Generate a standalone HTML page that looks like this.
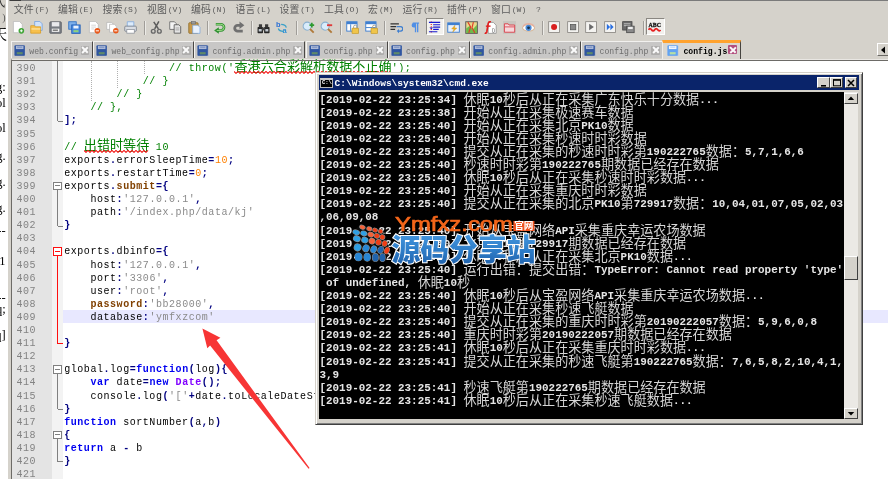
<!DOCTYPE html>
<html lang="zh-CN"><head><meta charset="utf-8"><title>config.js - Notepad++</title>
<style>
html,body{margin:0;padding:0;background:#fff}
body{width:888px;height:479px;overflow:hidden;position:relative;font-family:"Liberation Sans","Noto Sans CJK SC",sans-serif}
#root{will-change:transform;position:absolute;left:0;top:0;width:888px;height:479px;overflow:hidden;background:#d5d2cb}
#strip{position:absolute;left:0;top:0;width:8px;height:479px;background:#fff;overflow:hidden;z-index:5}
#strip .sg{position:absolute;left:0;top:0;width:5.5px;height:28px;background:#d5d2cb;border-bottom:1px solid #444;overflow:hidden}
#strip .sg .fr{right:0}
.fr{position:absolute;right:2.4px;font:12.5px/16px "Liberation Serif","Noto Serif CJK SC",serif;color:#000;white-space:nowrap}
.fr.big{font-size:14px;right:1px}
#npp{position:absolute;left:8.5px;top:0;right:0;height:61px}
#topline{position:absolute;left:0;top:0;right:0;height:1.4px;background:#7b7b7b}
#topline:before{content:"";position:absolute;left:1px;top:0;width:11.5px;height:0.8px;background:#3c3c3c}
#menu{position:absolute;left:-8.5px;top:0;width:888px;height:18px}
.mi{position:absolute;top:4.3px;font:9.9px/12px "Liberation Sans","Noto Sans CJK SC",sans-serif;color:#5c5c5c;white-space:nowrap;letter-spacing:0}
.mi i{font:normal 8.1px/12px "Liberation Mono",monospace;color:#5a5a5a;position:relative;top:-1.6px;margin-left:1px}
#toolbar{position:absolute;left:-8.5px;top:19px;width:888px;height:20px}
#toolbar svg{position:absolute;top:1.5px}
.sep{position:absolute;top:1.5px;width:1px;height:14.5px;background:#a09d98;box-shadow:1px 0 0 #ecebe7}
.pressed{position:absolute;top:-1.5px;height:17.5px;background:#f2f1ee;border:1px solid;border-color:#8a8782 #fff #fff #8a8782;box-sizing:border-box}
#tabs{position:absolute;left:-8.5px;top:40px;width:888px;height:19px}
.tab{position:absolute;top:0.5px;height:17px;background:#c8c7c6;box-sizing:border-box;border-top:1px solid #f2f1ef;border-right:1.5px solid #4a4845;border-left:1px solid #f4f3f0;white-space:nowrap;overflow:hidden}
.tab.act{top:-0.5px;height:19.5px;background:#dad7d1;border-top:3.2px solid #ffa22e;border-right:1.5px solid #45433f;border-left:1px solid #f0eeea}
.tab .fi{position:absolute;left:2px;top:3.3px}
.tab.act .fi{top:2.6px;left:4.2px}
.tab .tt{position:absolute;left:17.3px;top:4.2px;font:8.15px/11px "Liberation Mono",monospace;color:#6e6e6e}
.tab.act .tt{color:#000;font-weight:bold;top:3.6px;left:20.2px;font-size:8.15px}
.tx{position:absolute;right:2.7px;top:4.6px;width:8.6px;height:8.5px;background:#aeadac;border-radius:1px}
.tx:before,.tx:after{content:"";position:absolute;left:3.5px;top:0.2px;width:1.6px;height:8.1px;background:#fafafa;transform:rotate(45deg)}
.tx:after{transform:rotate(-45deg)}
.tx.ax{background:#b24f7e;top:2.9px;right:3.6px;width:9.2px;height:9px}
.tx.ax:before,.tx.ax:after{left:3.8px;top:0.3px;height:8.4px;width:1.7px}
#tabscroll{position:absolute;left:876.7px;top:3px;width:12px;height:13px;background:#d5d2cb;border:1px solid;border-color:#fff #6b6964 #6b6964 #fff;box-sizing:border-box}
#tabscroll svg{position:absolute;left:2px;top:1.5px}
#editor{position:absolute;left:0;top:0;width:888px;height:479px}
#editor:before{content:"";position:absolute;left:11px;top:59px;right:0;bottom:0;background:#fff;border-top:1px solid #e9e7e3;border-left:1px solid #6d6b67}
#editor:after{content:"";position:absolute;left:11px;top:60px;right:0;height:1px;background:#6d6b67}
.lnbg{position:absolute;left:12px;top:61px;width:39.5px;bottom:0;background:#e4e4e4}
.foldbg{position:absolute;left:51.5px;top:61px;width:11.5px;bottom:0;background:#f3f3f3}
.hl{position:absolute;left:63px;right:0;height:13.1px;background:#e8e8ff}
.ig{position:absolute;width:0;border-left:1px dotted #b0b0b0}
.ln{position:absolute;left:16.4px;height:13.1px;font:10px/13.1px "Liberation Mono",monospace;letter-spacing:0.55px;color:#838383;white-space:pre}
.cl{position:absolute;left:64.2px;height:13.1px;font:10px/13.1px "Liberation Mono","Noto Serif CJK SC",monospace;letter-spacing:0.55px;color:#000;white-space:pre}
.cl .c{letter-spacing:0;font-size:13.1px;font-family:"Noto Sans CJK SC","Noto Serif CJK SC",sans-serif;line-height:0;position:relative}
.sq{position:absolute}
.o{color:#000080;font-weight:bold}
.s{color:#8a8a8a}
.k{color:#0000f0;font-weight:bold}
.g{color:#008000}
.n{color:#ff8000}
.b{color:#804000;font-weight:bold}
.t{color:#8000ff;font-weight:bold}
#arrow{position:absolute;left:0;top:0}
#cmd{position:absolute;left:315px;top:72px;width:547.5px;height:352.6px;background:#d5d2cb;box-sizing:border-box;border:1px solid;border-color:#d4d0c8 #404040 #404040 #d4d0c8;box-shadow:inset 1px 1px 0 #fff,inset -1px -1px 0 #808080}
#ctitle{position:absolute;left:2.5px;top:2px;width:540.5px;height:14.8px;background:#0a246a}
#cicon{position:absolute;left:1.8px;top:2.8px;width:12.8px;height:10px;background:#000;border:0.8px solid #b8b8b8;border-top:2px solid #c8c8c8;box-sizing:border-box;overflow:hidden}
#cicon b{position:absolute;left:0.6px;top:0.6px;font:bold 5.6px/6px "Liberation Mono",monospace;color:#fff}
#ctext{position:absolute;left:16px;top:1.6px;font:bold 9.52px/13px "Liberation Mono",monospace;color:#fff;white-space:pre}
.wb{position:absolute;top:2.2px;width:12.5px;height:10.7px;background:#d5d2cb;box-sizing:border-box;border:1px solid;border-color:#fff #404040 #404040 #fff}
.wb svg{position:absolute;left:-0.5px;top:-0.5px}
#cclient{position:absolute;left:2.7px;top:18.6px;width:525.7px;height:327.8px;background:#000;overflow:hidden}
.tl{position:absolute;left:0.8px;height:13.1px;font:bold 10.92px/13.1px "Liberation Mono",monospace;color:#e6e6e6;white-space:pre}
.tl .cc{font:400 13.1px/0 "Noto Sans CJK SC","Noto Serif CJK SC",sans-serif;color:#d6d6d6;position:relative;top:1px}
#cscroll{position:absolute;left:528.4px;top:18.6px;width:13.4px;height:327.8px;background:#ebe9e5}
.sb{position:absolute;left:0;width:13.4px;height:11.5px;background:#d5d2cb;box-sizing:border-box;border:1px solid;border-color:#fff #404040 #404040 #fff}
.sb svg{position:absolute;left:-0.3px;top:-1px}
#logo{position:absolute;left:345px;top:208px}

</style></head><body>
<div id="root">
<div id="strip"><div class="sg"><span class="fr big" style="top:-6px;color:#333">式</span><span class="fr" style="top:10px;color:#555;font-size:10px">)</span></div><span class="fr big" style="top:27px">天</span><span class="fr" style="top:78.8px">g:</span><span class="fr" style="top:94.8px">ol</span><span class="fr" style="top:120.3px">ol</span><span class="fr" style="top:147.8px">g.</span><span class="fr" style="top:173.8px">g.</span><span class="fr" style="top:199.8px">g.</span><span class="fr" style="top:222.8px">--</span><span class="fr" style="top:252.8px">.1</span><span class="fr" style="top:289.8px">--</span><span class="fr" style="top:300.8px">q;</span><span class="fr" style="top:326.8px">q]</span></div>
<div id="npp">
<div id="topline"></div>
<div id="menu"><span class="mi" style="left:13.8px">文件<i>(F)</i></span><span class="mi" style="left:58.0px">编辑<i>(E)</i></span><span class="mi" style="left:102.5px">搜索<i>(S)</i></span><span class="mi" style="left:147.0px">视图<i>(V)</i></span><span class="mi" style="left:191.0px">编码<i>(N)</i></span><span class="mi" style="left:235.5px">语言<i>(L)</i></span><span class="mi" style="left:279.5px">设置<i>(T)</i></span><span class="mi" style="left:324.0px">工具<i>(O)</i></span><span class="mi" style="left:368.0px">宏<i>(M)</i></span><span class="mi" style="left:402.5px">运行<i>(R)</i></span><span class="mi" style="left:447.0px">插件<i>(P)</i></span><span class="mi" style="left:491.0px">窗口<i>(W)</i></span><span class="mi" style="left:535px"><i>?</i></span></div>
<div id="toolbar"><svg style="left:11.9px" width="13.1" height="13.1" viewBox="0 0 14 14"><path d="M1.5 0.5 H8 L11 3.5 V12.5 H1.5 Z" fill="#fff" stroke="#b8b8b8" stroke-width="0.8"/><circle cx="10" cy="10.5" r="3" fill="#3fa535"/><path d="M8.5 10.5h3M10 9v3" stroke="#fff" stroke-width="1"/></svg><svg style="left:30.2px" width="13.1" height="13.1" viewBox="0 0 14 14"><path d="M5 0.5h5.5l2.5 2.5v7H5z" fill="#cfe2fb" stroke="#6d9fe0" stroke-width="0.8"/><path d="M0.8 5h4l1 1.2h5.5V13H0.8z" fill="#f7c04d" stroke="#d99a1f" stroke-width="0.8"/><path d="M1.5 8.5h9.5" stroke="#fde9b0" stroke-width="1.2"/></svg><svg style="left:48.7px" width="13.1" height="13.1" viewBox="0 0 14 14"><rect x="0.8" y="0.8" width="12.4" height="12.4" rx="1" fill="#777b82" stroke="#5b5e64" stroke-width="0.8"/><rect x="3" y="1.2" width="8" height="4.6" fill="#e9e9ec"/><rect x="3" y="8.2" width="8" height="3.4" fill="#f5f5f5"/><rect x="4" y="9.2" width="5.5" height="1.2" fill="#555"/></svg><svg style="left:68.2px" width="13.1" height="13.1" viewBox="0 0 14 14"><rect x="0.8" y="0.8" width="8" height="8" fill="#7fb0ea" stroke="#2e6fc2" stroke-width="0.9"/><rect x="4" y="4.2" width="9" height="9" fill="#4a8be0" stroke="#1f5db5" stroke-width="0.9"/><rect x="5.8" y="5" width="5.4" height="3" fill="#eaf2fd"/><rect x="5.8" y="9.8" width="5.4" height="2.2" fill="#8ed17c"/></svg><svg style="left:87.7px" width="13.1" height="13.1" viewBox="0 0 14 14"><path d="M1.5 0.5 H8 L11 3.5 V12.5 H1.5 Z" fill="#fff" stroke="#b8b8b8" stroke-width="0.8"/><path d="M3.5 4.5h5M3.5 6.5h5M3.5 8.5h3" stroke="#c9c9c9" stroke-width="0.8"/><circle cx="10" cy="10.5" r="3" fill="#e8581a"/><path d="M8.3 10.5h3.4" stroke="#fff" stroke-width="1.1"/></svg><svg style="left:106.2px" width="13.1" height="13.1" viewBox="0 0 14 14"><path d="M0.8 1.5H6l2 2V9H0.8z" fill="#fff" stroke="#b5b5b5" stroke-width="0.8"/><path d="M3.8 3.5H9l2 2V12H3.8z" fill="#fff" stroke="#b5b5b5" stroke-width="0.8"/><circle cx="10.5" cy="10.5" r="2.9" fill="#e8581a"/><path d="M8.9 10.5h3.2" stroke="#fff" stroke-width="1.1"/></svg><svg style="left:123.7px" width="13.1" height="13.1" viewBox="0 0 14 14"><path d="M3.5 0.8h7v5h-7z" fill="#dcebfb" stroke="#7aa7de" stroke-width="0.8"/><rect x="0.8" y="5.5" width="12.4" height="5.5" rx="1" fill="#d9dde3" stroke="#6f7782" stroke-width="0.8"/><rect x="3" y="9" width="8" height="4" fill="#fff" stroke="#8a8f98" stroke-width="0.8"/></svg><span class="sep" style="left:144.0px"></span><svg style="left:150.2px" width="13.1" height="13.1" viewBox="0 0 14 14"><path d="M9.5 0.5L5 8.5M4 1l5 7.5" stroke="#5a5a5a" stroke-width="1.6"/><circle cx="3.5" cy="11" r="2" fill="none" stroke="#6a6a6a" stroke-width="1.5"/><circle cx="10" cy="11" r="2" fill="none" stroke="#6a6a6a" stroke-width="1.5"/></svg><svg style="left:168.7px" width="13.1" height="13.1" viewBox="0 0 14 14"><path d="M0.8 0.8h5l2 2V9h-7z" fill="#f4f4f4" stroke="#666" stroke-width="0.9"/><path d="M5.5 4h5l2 2v7h-7z" fill="#e4e4e4" stroke="#555" stroke-width="0.9"/><path d="M7 7.5h4M7 9.5h4" stroke="#888" stroke-width="0.7"/></svg><svg style="left:187.7px" width="13.1" height="13.1" viewBox="0 0 14 14"><rect x="0.8" y="1.8" width="10" height="11.4" rx="1" fill="#c89a4a" stroke="#8a6a2a" stroke-width="0.8"/><rect x="3.5" y="0.6" width="4.6" height="2.6" fill="#9a9a9a" stroke="#666" stroke-width="0.6"/><path d="M5 4.5h5.5l2.3 2.3v6.4H5z" fill="#eaf2fd" stroke="#7aa7de" stroke-width="0.8"/></svg><span class="sep" style="left:207.0px"></span><svg style="left:213.2px" width="13.1" height="13.1" viewBox="0 0 14 14"><path d="M3 3.5h5.5a3.2 3.2 0 0 1 0 6.6H5" fill="none" stroke="#2f9130" stroke-width="2.8"/><path d="M6.2 6.6L1.2 10.2L6.2 13.6z" fill="#2f9130"/><path d="M3.4 3.5h5.1a3.2 3.2 0 0 1 0 6.6H4" fill="none" stroke="#a5e08f" stroke-width="1"/></svg><svg style="left:231.7px" width="13.1" height="13.1" viewBox="0 0 14 14"><path d="M9 4.6H6a3 3 0 0 0 0 6.2h5.5" fill="none" stroke="#707070" stroke-width="3"/><path d="M8 0.6l5.2 4L8 8.6z" fill="#707070"/></svg><span class="sep" style="left:251.0px"></span><svg style="left:256.7px" width="13.1" height="13.1" viewBox="0 0 14 14"><rect x="0.6" y="6.5" width="5.8" height="6.5" rx="0.8" fill="#262626"/><rect x="7.6" y="6.5" width="5.8" height="6.5" rx="0.8" fill="#262626"/><rect x="2" y="3.5" width="3.4" height="3.4" fill="#3a3a3a"/><rect x="8.6" y="3.5" width="3.4" height="3.4" fill="#3a3a3a"/><rect x="5.5" y="7" width="3" height="3" fill="#444"/><rect x="1.8" y="8.6" width="3.2" height="2.6" fill="#c5ccd4"/><rect x="8.9" y="8.6" width="3.2" height="2.6" fill="#c5ccd4"/></svg><svg style="left:275.7px" width="13.1" height="13.1" viewBox="0 0 14 14"><text x="0" y="6.5" font-family="Liberation Sans,sans-serif" font-size="8" font-weight="bold" fill="#2a6fd6">b</text><text x="7" y="13" font-family="Liberation Sans,sans-serif" font-size="8" font-weight="bold" fill="#2a8fd6">a</text><path d="M5.5 3.5c3 0 5 1 5.5 3.5M8 11c-3 0-5-1-5.5-3" fill="none" stroke="#39a0c8" stroke-width="1.3"/></svg><span class="sep" style="left:296.0px"></span><svg style="left:301.7px" width="13.1" height="13.1" viewBox="0 0 14 14"><circle cx="5.5" cy="5.5" r="4.3" fill="#d9ecfb" stroke="#8ab0cf" stroke-width="1.1"/><path d="M8.5 8.5l4 4" stroke="#b07a3a" stroke-width="2"/><path d="M8 4.5h5M10.5 2v5" stroke="#2e9a2e" stroke-width="1.8"/></svg><svg style="left:320.2px" width="13.1" height="13.1" viewBox="0 0 14 14"><circle cx="5.5" cy="5.5" r="4.3" fill="#d9ecfb" stroke="#8ab0cf" stroke-width="1.1"/><path d="M8.5 8.5l4 4" stroke="#b07a3a" stroke-width="2"/><path d="M7.5 4.5h5.5" stroke="#e03a3a" stroke-width="2"/></svg><span class="sep" style="left:339.5px"></span><svg style="left:345.7px" width="13.1" height="13.1" viewBox="0 0 14 14"><rect x="0.8" y="0.8" width="11" height="10" fill="#fff" stroke="#3f7fd0" stroke-width="1"/><rect x="0.8" y="0.8" width="11" height="2.6" fill="#3f7fd0"/><path d="M5 3.5v7" stroke="#3f7fd0" stroke-width="1"/><rect x="6.4" y="7.6" width="7" height="6" rx="0.8" fill="#f0c54a" stroke="#b8902a" stroke-width="0.7"/><path d="M8.1 7.6V6.2a1.8 1.8 0 0 1 3.6 0V7.6" fill="none" stroke="#a8a08a" stroke-width="1"/></svg><svg style="left:364.7px" width="13.1" height="13.1" viewBox="0 0 14 14"><rect x="0.8" y="0.8" width="11" height="10" fill="#fff" stroke="#3f7fd0" stroke-width="1"/><rect x="0.8" y="0.8" width="11" height="2.6" fill="#3f7fd0"/><path d="M1 7h10.5" stroke="#3f7fd0" stroke-width="1"/><rect x="6.4" y="7.6" width="7" height="6" rx="0.8" fill="#f0c54a" stroke="#b8902a" stroke-width="0.7"/><path d="M8.1 7.6V6.2a1.8 1.8 0 0 1 3.6 0V7.6" fill="none" stroke="#a8a08a" stroke-width="1"/></svg><span class="sep" style="left:384.0px"></span><svg style="left:389.7px" width="13.1" height="13.1" viewBox="0 0 14 14"><path d="M0.5 3h9M0.5 6h6M0.5 9h5" stroke="#333" stroke-width="1.3"/><path d="M7 6h4.2a1.8 1.8 0 0 1 0 4.8H9" fill="none" stroke="#3f7fd0" stroke-width="1.3"/><path d="M9.6 8.6L7.2 10.8l2.4 2.2z" fill="#3f7fd0"/></svg><svg style="left:408.7px" width="11.2" height="13.1" viewBox="0 0 12 14"><path d="M7 2.2V12M9.3 2.2V12" stroke="#4f8fe6" stroke-width="1.4"/><path d="M7.5 2.2H5.2a2.4 2.4 0 0 0 0 4.8h2.3z" fill="#4f8fe6"/><path d="M4 2.2h6.8" stroke="#4f8fe6" stroke-width="1.2"/></svg><span class="pressed" style="left:426px;width:18px"></span><svg style="left:428.2px" width="13.1" height="13.1" viewBox="0 0 14 14"><path d="M3.5 0.5v13" stroke="#e02020" stroke-width="1.2" stroke-dasharray="1.3 1.3"/><path d="M1 1.5h12M5.5 4h7.5M5.5 6.5h7.5M5.5 9h6M1 11.5h9" stroke="#1a1ad0" stroke-width="1.3"/><path d="M1.5 7l2 1.8l2-1.8" fill="#1a1ad0"/></svg><svg style="left:446.7px" width="13.1" height="13.1" viewBox="0 0 14 14"><rect x="0.8" y="2" width="12.4" height="10" fill="#e9f1fb" stroke="#3f7fd0" stroke-width="1"/><rect x="0.8" y="2" width="12.4" height="2.4" fill="#3f7fd0"/><path d="M8.5 4.5L5 8.5h2.5L6 12l4.5-4.5H8z" fill="#f0b020" stroke="#c98a10" stroke-width="0.4"/></svg><svg style="left:465.2px" width="13.1" height="13.1" viewBox="0 0 14 14"><rect x="0.8" y="0.8" width="12.4" height="12.4" fill="#e9d98a" stroke="#555" stroke-width="1"/><path d="M1.2 8l4-3l3 4l4.6-5v8.8H1.2z" fill="#6fba4a"/><path d="M3 1.2l3 5l-2 6.5M9 1.2l-1.5 6l3 5.5" fill="none" stroke="#e03a2a" stroke-width="1.2"/></svg><svg style="left:483.7px" width="13.1" height="13.1" viewBox="0 0 14 14"><path d="M4.5 1.5h5.5l3 3v8.7H4.5z" fill="#fff" stroke="#8a8a8a" stroke-width="0.8"/><path d="M7.5 0.8c-2.5-0.5-3 1.2-3.3 3.5L3 11.5c-0.3 1.5-1.2 1.8-2.2 1.3" fill="none" stroke="#e02020" stroke-width="1.8"/><path d="M2 5.5h5" stroke="#e02020" stroke-width="1.5"/><text x="8.2" y="11.5" font-family="Liberation Sans,sans-serif" font-size="5.5" fill="#555">()</text></svg><svg style="left:503.2px" width="13.1" height="13.1" viewBox="0 0 14 14"><rect x="0" y="0" width="14" height="14" fill="#c9c6c0"/><path d="M1.5 3h4l1 1.3h6V12h-11z" fill="#f6d9dc" stroke="#d9404a" stroke-width="1"/><path d="M2 6.3h10" stroke="#d9404a" stroke-width="0.9"/></svg><svg style="left:521.7px" width="13.1" height="13.1" viewBox="0 0 14 14"><path d="M0.3 7.5C3 2.5 11 2.5 13.7 7.5C11 12 3 12 0.3 7.5z" fill="#fff" stroke="#d8b89a" stroke-width="1.1"/><circle cx="7" cy="7.3" r="3.3" fill="#4a8ad8"/><circle cx="7" cy="7.3" r="1.5" fill="#16324f"/><path d="M0.8 5.8C3.5 1.8 10.5 1.8 13.2 5.8" fill="none" stroke="#e6b0a0" stroke-width="1.1"/></svg><span class="sep" style="left:541.5px"></span><svg style="left:547.7px" width="13.1" height="13.1" viewBox="0 0 14 14"><rect x="0.7" y="0.7" width="11.6" height="11.6" fill="#f4f3f0" stroke="#8a8782" stroke-width="0.9"/><circle cx="6.5" cy="6.5" r="3.2" fill="#d81e1e"/></svg><svg style="left:566.7px" width="13.1" height="13.1" viewBox="0 0 14 14"><rect x="0.7" y="0.7" width="11.6" height="11.6" fill="#f4f3f0" stroke="#8a8782" stroke-width="0.9"/><rect x="3.6" y="3.6" width="5.8" height="5.8" fill="#8a8a8a" stroke="#555" stroke-width="0.8"/></svg><svg style="left:585.4px" width="13.1" height="13.1" viewBox="0 0 14 14"><rect x="0.7" y="0.7" width="11.6" height="11.6" fill="#f4f3f0" stroke="#8a8782" stroke-width="0.9"/><path d="M4.5 3l5 3.5l-5 3.5z" fill="#6a6a6a"/></svg><svg style="left:604.2px" width="13.1" height="13.1" viewBox="0 0 14 14"><rect x="0.7" y="0.7" width="11.6" height="11.6" fill="#f4f3f0" stroke="#8a8782" stroke-width="0.9"/><path d="M3 3l3.5 3.5L3 10zM6.8 3l3.5 3.5L6.8 10z" fill="#2a6fe0"/></svg><svg style="left:622.2px" width="13.1" height="13.1" viewBox="0 0 14 14"><rect x="0.7" y="0.7" width="10" height="9" fill="#6a6a6a" stroke="#444" stroke-width="0.8"/><path d="M2 3h7M2 5h7" stroke="#ddd" stroke-width="0.8"/><rect x="5" y="5.5" width="8" height="7" fill="#8a8a8a" stroke="#444" stroke-width="0.8"/><rect x="6.5" y="6.2" width="5" height="2.4" fill="#eee"/></svg><span class="sep" style="left:642.5px"></span><span class="pressed" style="left:646px;width:18.5px"></span><svg style="left:648.2px" width="13.1" height="13.1" viewBox="0 0 14 14"><text x="0.6" y="5.9" font-family="Liberation Serif,serif" font-size="7.6" font-weight="bold" fill="#111" stroke="#111" stroke-width="0.35" textLength="13.2" lengthAdjust="spacingAndGlyphs">ABC</text><path d="M0.5 9.4c1.2-1.6 2.2-1.6 3.3 0s2.2 1.6 3.3 0s2.2-1.6 3.3 0s2 1.4 3 0.2" fill="none" stroke="#e62020" stroke-width="2"/></svg></div>
<div id="tabs"><div class="tab" style="left:11.0px;width:82.1px"><svg class="fi" width="11.4" height="11.2" viewBox="0 0 11 11"><rect x="0" y="0" width="11" height="11" rx="1.2" fill="#2f55a0" stroke="#e6e0d2" stroke-width="0.5"/><rect x="1.8" y="1" width="7.4" height="3" fill="#aebbd8"/><rect x="3" y="1.7" width="5" height="0.8" fill="#2f55a0" opacity="0.55"/><rect x="2.6" y="7" width="5.8" height="2.2" fill="#5f8a6a"/></svg><span class="tt">web.config</span><span class="tx"></span></div><div class="tab" style="left:93.1px;width:101.1px"><svg class="fi" width="11.4" height="11.2" viewBox="0 0 11 11"><rect x="0" y="0" width="11" height="11" rx="1.2" fill="#2f55a0" stroke="#e6e0d2" stroke-width="0.5"/><rect x="1.8" y="1" width="7.4" height="3" fill="#aebbd8"/><rect x="3" y="1.7" width="5" height="0.8" fill="#2f55a0" opacity="0.55"/><rect x="2.6" y="7" width="5.8" height="2.2" fill="#5f8a6a"/></svg><span class="tt">web_config.php</span><span class="tx"></span></div><div class="tab" style="left:194.2px;width:111.3px"><svg class="fi" width="11.4" height="11.2" viewBox="0 0 11 11"><rect x="0" y="0" width="11" height="11" rx="1.2" fill="#2f55a0" stroke="#e6e0d2" stroke-width="0.5"/><rect x="1.8" y="1" width="7.4" height="3" fill="#aebbd8"/><rect x="3" y="1.7" width="5" height="0.8" fill="#2f55a0" opacity="0.55"/><rect x="2.6" y="7" width="5.8" height="2.2" fill="#5f8a6a"/></svg><span class="tt">config.admin.php</span><span class="tx"></span></div><div class="tab" style="left:305.5px;width:82.3px"><svg class="fi" width="11.4" height="11.2" viewBox="0 0 11 11"><rect x="0" y="0" width="11" height="11" rx="1.2" fill="#2f55a0" stroke="#e6e0d2" stroke-width="0.5"/><rect x="1.8" y="1" width="7.4" height="3" fill="#aebbd8"/><rect x="3" y="1.7" width="5" height="0.8" fill="#2f55a0" opacity="0.55"/><rect x="2.6" y="7" width="5.8" height="2.2" fill="#5f8a6a"/></svg><span class="tt">config.php</span><span class="tx"></span></div><div class="tab" style="left:387.8px;width:82.2px"><svg class="fi" width="11.4" height="11.2" viewBox="0 0 11 11"><rect x="0" y="0" width="11" height="11" rx="1.2" fill="#2f55a0" stroke="#e6e0d2" stroke-width="0.5"/><rect x="1.8" y="1" width="7.4" height="3" fill="#aebbd8"/><rect x="3" y="1.7" width="5" height="0.8" fill="#2f55a0" opacity="0.55"/><rect x="2.6" y="7" width="5.8" height="2.2" fill="#5f8a6a"/></svg><span class="tt">config.php</span><span class="tx"></span></div><div class="tab" style="left:470.0px;width:111.3px"><svg class="fi" width="11.4" height="11.2" viewBox="0 0 11 11"><rect x="0" y="0" width="11" height="11" rx="1.2" fill="#2f55a0" stroke="#e6e0d2" stroke-width="0.5"/><rect x="1.8" y="1" width="7.4" height="3" fill="#aebbd8"/><rect x="3" y="1.7" width="5" height="0.8" fill="#2f55a0" opacity="0.55"/><rect x="2.6" y="7" width="5.8" height="2.2" fill="#5f8a6a"/></svg><span class="tt">config.admin.php</span><span class="tx"></span></div><div class="tab" style="left:581.3px;width:82.2px"><svg class="fi" width="11.4" height="11.2" viewBox="0 0 11 11"><rect x="0" y="0" width="11" height="11" rx="1.2" fill="#2f55a0" stroke="#e6e0d2" stroke-width="0.5"/><rect x="1.8" y="1" width="7.4" height="3" fill="#aebbd8"/><rect x="3" y="1.7" width="5" height="0.8" fill="#2f55a0" opacity="0.55"/><rect x="2.6" y="7" width="5.8" height="2.2" fill="#5f8a6a"/></svg><span class="tt">config.php</span><span class="tx"></span></div><div class="tab act" style="left:662.2px;width:79.3px"><svg class="fi" width="11.4" height="11.2" viewBox="0 0 11 11"><rect x="0" y="0" width="11" height="11" rx="1.2" fill="#62a2f2" stroke="#e6e0d2" stroke-width="0.5"/><rect x="1.8" y="1" width="7.4" height="3" fill="#f2f7ff"/><rect x="3" y="1.7" width="5" height="0.8" fill="#62a2f2" opacity="0.55"/><rect x="2.6" y="7" width="5.8" height="2.2" fill="#b5dfa5"/></svg><span class="tt">config.js</span><span class="tx ax"></span></div><div id="tabscroll"><svg width="6" height="8" viewBox="0 0 6 8"><path d="M5 0.5 L1 4 L5 7.5 Z" fill="#000"/></svg></div></div>
</div>
<div id="editor"><div class="lnbg"></div><div class="foldbg"></div>
<div class="hl" style="top:310.20px"></div>
<div class="ig" style="left:91.2px;top:61.0px;height:39.6px"></div>
<div class="ig" style="left:117.4px;top:61.0px;height:26.5px"></div>
<div class="ig" style="left:143.6px;top:61.0px;height:13.4px"></div>
<div class="ln" style="top:62.00px">390</div>
<div class="cl" style="top:62.00px">                <span class="g">// throw('<span class="c z">香港六合彩解析数据不正确</span>');</span></div>
<div class="ln" style="top:75.10px">391</div>
<div class="cl" style="top:75.10px">            <span class="g">// }</span></div>
<div class="ln" style="top:88.20px">392</div>
<div class="cl" style="top:88.20px">        <span class="g">// }</span></div>
<div class="ln" style="top:101.30px">393</div>
<div class="cl" style="top:101.30px">    <span class="g">// },</span></div>
<div class="ln" style="top:114.40px">394</div>
<div class="cl" style="top:114.40px"><span class="o">];</span></div>
<div class="ln" style="top:127.50px">395</div>
<div class="ln" style="top:140.60px">396</div>
<div class="cl" style="top:140.60px"><span class="g">// <span class="c z">出错时等待</span> 10</span></div>
<div class="ln" style="top:153.70px">397</div>
<div class="cl" style="top:153.70px">exports<span class="o">.</span>errorSleepTime<span class="o">=</span><span class="n">10</span><span class="o">;</span></div>
<div class="ln" style="top:166.80px">398</div>
<div class="cl" style="top:166.80px">exports<span class="o">.</span>restartTime<span class="o">=</span><span class="n">0</span><span class="o">;</span></div>
<div class="ln" style="top:179.90px">399</div>
<div class="cl" style="top:179.90px">exports<span class="o">.</span><span class="b">submit</span><span class="o">={</span></div>
<div class="ln" style="top:193.00px">400</div>
<div class="cl" style="top:193.00px">    host<span class="o">:</span><span class="s">'127.0.0.1'</span><span class="o">,</span></div>
<div class="ln" style="top:206.10px">401</div>
<div class="cl" style="top:206.10px">    path<span class="o">:</span><span class="s">'/index.php/data/kj'</span></div>
<div class="ln" style="top:219.20px">402</div>
<div class="cl" style="top:219.20px"><span class="o">}</span></div>
<div class="ln" style="top:232.30px">403</div>
<div class="ln" style="top:245.40px">404</div>
<div class="cl" style="top:245.40px">exports<span class="o">.</span>dbinfo<span class="o">={</span></div>
<div class="ln" style="top:258.50px">405</div>
<div class="cl" style="top:258.50px">    host<span class="o">:</span><span class="s">'127.0.0.1'</span><span class="o">,</span></div>
<div class="ln" style="top:271.60px">406</div>
<div class="cl" style="top:271.60px">    port<span class="o">:</span><span class="s">'3306'</span><span class="o">,</span></div>
<div class="ln" style="top:284.70px">407</div>
<div class="cl" style="top:284.70px">    user<span class="o">:</span><span class="s">'root'</span><span class="o">,</span></div>
<div class="ln" style="top:297.80px">408</div>
<div class="cl" style="top:297.80px">    <span class="b">password</span><span class="o">:</span><span class="s">'bb28000'</span><span class="o">,</span></div>
<div class="ln" style="top:310.90px">409</div>
<div class="cl" style="top:310.90px">    database<span class="o">:</span><span class="s">'ymfxzcom'</span></div>
<div class="ln" style="top:324.00px">410</div>
<div class="ln" style="top:337.10px">411</div>
<div class="cl" style="top:337.10px"><span class="o">}</span></div>
<div class="ln" style="top:350.20px">412</div>
<div class="ln" style="top:363.30px">413</div>
<div class="cl" style="top:363.30px">global<span class="o">.</span>log<span class="o">=</span><span class="k">function</span><span class="o">(</span>log<span class="o">){</span></div>
<div class="ln" style="top:376.40px">414</div>
<div class="cl" style="top:376.40px">    <span class="k">var</span> date<span class="o">=</span><span class="k">new</span> <span class="t">Date</span><span class="o">();</span></div>
<div class="ln" style="top:389.50px">415</div>
<div class="cl" style="top:389.50px">    console<span class="o">.</span>log<span class="o">(</span><span class="s">'['</span><span class="o">+</span>date<span class="o">.</span>toLocaleDateString<span class="o">()+</span><span class="s">' '</span><span class="o">+</span>date<span class="o">.</span>toLocaleTimeString<span class="o">()+</span><span class="s">'] '</span><span class="o">+</span>log<span class="o">)</span></div>
<div class="ln" style="top:402.60px">416</div>
<div class="cl" style="top:402.60px"><span class="o">}</span></div>
<div class="ln" style="top:415.70px">417</div>
<div class="cl" style="top:415.70px"><span class="k">function</span> sortNumber<span class="o">(</span>a<span class="o">,</span>b<span class="o">)</span></div>
<div class="ln" style="top:428.80px">418</div>
<div class="cl" style="top:428.80px"><span class="o">{</span></div>
<div class="ln" style="top:441.90px">419</div>
<div class="cl" style="top:441.90px"><span class="k">return</span> a <span class="o">-</span> b</div>
<div class="ln" style="top:455.00px">420</div>
<div class="cl" style="top:455.00px"><span class="o">}</span></div>
<div class="ln" style="top:468.10px">421</div>
<svg class="sq" style="left:234.3px;top:71.1px" width="156.2" height="3" viewBox="0 0 156.2 3"><polyline points="0.0,0.4 2.0,2.4 4.0,0.4 6.0,2.4 8.0,0.4 10.0,2.4 12.0,0.4 14.0,2.4 16.0,0.4 18.0,2.4 20.0,0.4 22.0,2.4 24.0,0.4 26.0,2.4 28.0,0.4 30.0,2.4 32.0,0.4 34.0,2.4 36.0,0.4 38.0,2.4 40.0,0.4 42.0,2.4 44.0,0.4 46.0,2.4 48.0,0.4 50.0,2.4 52.0,0.4 54.0,2.4 56.0,0.4 58.0,2.4 60.0,0.4 62.0,2.4 64.0,0.4 66.0,2.4 68.0,0.4 70.0,2.4 72.0,0.4 74.0,2.4 76.0,0.4 78.0,2.4 80.0,0.4 82.0,2.4 84.0,0.4 86.0,2.4 88.0,0.4 90.0,2.4 92.0,0.4 94.0,2.4 96.0,0.4 98.0,2.4 100.0,0.4 102.0,2.4 104.0,0.4 106.0,2.4 108.0,0.4 110.0,2.4 112.0,0.4 114.0,2.4 116.0,0.4 118.0,2.4 120.0,0.4 122.0,2.4 124.0,0.4 126.0,2.4 128.0,0.4 130.0,2.4 132.0,0.4 134.0,2.4 136.0,0.4 138.0,2.4 140.0,0.4 142.0,2.4 144.0,0.4 146.0,2.4 148.0,0.4 150.0,2.4 152.0,0.4 154.0,2.4 156.0,0.4" fill="none" stroke="#f41414" stroke-width="1.05"/></svg>
<svg class="sq" style="left:83.7px;top:149.7px" width="65.1" height="3" viewBox="0 0 65.1 3"><polyline points="0.0,0.4 2.0,2.4 4.0,0.4 6.0,2.4 8.0,0.4 10.0,2.4 12.0,0.4 14.0,2.4 16.0,0.4 18.0,2.4 20.0,0.4 22.0,2.4 24.0,0.4 26.0,2.4 28.0,0.4 30.0,2.4 32.0,0.4 34.0,2.4 36.0,0.4 38.0,2.4 40.0,0.4 42.0,2.4 44.0,0.4 46.0,2.4 48.0,0.4 50.0,2.4 52.0,0.4 54.0,2.4 56.0,0.4 58.0,2.4 60.0,0.4 62.0,2.4 64.0,0.4" fill="none" stroke="#f41414" stroke-width="1.05"/></svg>
<div style="position:absolute;left:57.0px;top:61.0px;width:1px;height:60.2px;background:#808080"></div>
<div style="position:absolute;left:57.5px;top:120.7px;height:1px;width:5.0px;background:#808080"></div>
<div style="position:absolute;left:57.0px;top:189.8px;width:1px;height:36.3px;background:#808080"></div>
<div style="position:absolute;left:57.5px;top:225.6px;height:1px;width:5.0px;background:#808080"></div>
<div style="position:absolute;left:53.0px;top:181.7px;width:7px;height:6.5px;border:1px solid #808080;background:#fff"></div><div style="position:absolute;left:55.0px;top:185.4px;height:1px;width:5.0px;background:#808080"></div>
<div style="position:absolute;left:57.0px;top:255.2px;width:1px;height:88.7px;background:#ff1010"></div>
<div style="position:absolute;left:57.5px;top:343.4px;height:1px;width:5.0px;background:#ff1010"></div>
<div style="position:absolute;left:53.0px;top:247.2px;width:7px;height:6.5px;border:1px solid #ff1010;background:#fff"></div><div style="position:absolute;left:55.0px;top:250.9px;height:1px;width:5.0px;background:#ff1010"></div>
<div style="position:absolute;left:57.0px;top:373.2px;width:1px;height:36.3px;background:#808080"></div>
<div style="position:absolute;left:57.5px;top:408.9px;height:1px;width:5.0px;background:#808080"></div>
<div style="position:absolute;left:53.0px;top:365.1px;width:7px;height:6.5px;border:1px solid #808080;background:#fff"></div><div style="position:absolute;left:55.0px;top:368.9px;height:1px;width:5.0px;background:#808080"></div>
<div style="position:absolute;left:57.0px;top:438.7px;width:1px;height:23.2px;background:#808080"></div>
<div style="position:absolute;left:57.5px;top:461.4px;height:1px;width:5.0px;background:#808080"></div>
<div style="position:absolute;left:53.0px;top:430.6px;width:7px;height:6.5px;border:1px solid #808080;background:#fff"></div><div style="position:absolute;left:55.0px;top:434.4px;height:1px;width:5.0px;background:#808080"></div></div>
<svg id="arrow" width="888" height="479" viewBox="0 0 888 479"><polygon points="202.4,328.6 220.4,337.7 216.6,340.3 309.6,468.0 308.6,468.8 210.1,345.4 207.3,348.3" fill="#f73535"/></svg>
<div id="cmd">
 <div id="ctitle"><span id="cicon"><b>C:\</b></span><span id="ctext">C:\Windows\system32\cmd.exe</span>
  <span class="wb" style="left:498.5px"><svg width="12" height="10" viewBox="0 0 12 10"><rect x="3" y="7" width="5" height="1.6" fill="#000"/></svg></span>
  <span class="wb" style="left:511.5px"><svg width="12" height="10" viewBox="0 0 12 10"><rect x="2.5" y="1.8" width="7" height="6" fill="none" stroke="#000" stroke-width="1"/><rect x="2" y="1.3" width="8" height="1.4" fill="#000"/></svg></span>
  <span class="wb" style="left:526px"><svg width="12" height="10" viewBox="0 0 12 10"><path d="M3 2 L9 8 M9 2 L3 8" stroke="#000" stroke-width="1.5"/></svg></span>
 </div>
 <div id="cclient"><div class="tl" style="top:2.00px">[2019-02-22 23:25:34] <span class="cc">休眠</span>10<span class="cc">秒后从正在采集广东快乐十分数据</span>...</div>
<div class="tl" style="top:15.10px">[2019-02-22 23:25:38] <span class="cc">开始从正在采集极速赛车数据</span></div>
<div class="tl" style="top:28.20px">[2019-02-22 23:25:40] <span class="cc">开始从正在采集北京</span>PK10<span class="cc">数据</span></div>
<div class="tl" style="top:41.30px">[2019-02-22 23:25:40] <span class="cc">开始从正在采集秒速时时彩数据</span></div>
<div class="tl" style="top:54.40px">[2019-02-22 23:25:40] <span class="cc">提交从正在采集的秒速时时彩第</span>190222765<span class="cc">数据：</span>5,7,1,6,6</div>
<div class="tl" style="top:67.50px">[2019-02-22 23:25:40] <span class="cc">秒速时时彩第</span>190222765<span class="cc">期数据已经存在数据</span></div>
<div class="tl" style="top:80.60px">[2019-02-22 23:25:40] <span class="cc">休眠</span>10<span class="cc">秒后从正在采集秒速时时彩数据</span>...</div>
<div class="tl" style="top:93.70px">[2019-02-22 23:25:40] <span class="cc">开始从正在采集重庆时时彩数据</span></div>
<div class="tl" style="top:106.80px">[2019-02-22 23:25:40] <span class="cc">提交从正在采集的北京</span>PK10<span class="cc">第</span>729917<span class="cc">数据：</span>10,04,01,07,05,02,03</div>
<div class="tl" style="top:119.90px">,06,09,08</div>
<div class="tl" style="top:133.00px">[2019-02-22 23:25:40] <span class="cc">开始从宝盈网络</span>API<span class="cc">采集重庆幸运农场数据</span></div>
<div class="tl" style="top:146.10px">[2019-02-22 23:25:40] <span class="cc">北京</span>PK10<span class="cc">第</span>729917<span class="cc">期数据已经存在数据</span></div>
<div class="tl" style="top:159.20px">[2019-02-22 23:25:40] <span class="cc">休眠</span>10<span class="cc">秒后从正在采集北京</span>PK10<span class="cc">数据</span>...</div>
<div class="tl" style="top:172.30px">[2019-02-22 23:25:40] <span class="cc">运行出错：提交出错：</span>TypeError: Cannot read property 'type'</div>
<div class="tl" style="top:185.40px"> of undefined, <span class="cc">休眠</span>10<span class="cc">秒</span></div>
<div class="tl" style="top:198.50px">[2019-02-22 23:25:40] <span class="cc">休眠</span>10<span class="cc">秒后从宝盈网络</span>API<span class="cc">采集重庆幸运农场数据</span>...</div>
<div class="tl" style="top:211.60px">[2019-02-22 23:25:40] <span class="cc">开始从正在采集秒速飞艇数据</span></div>
<div class="tl" style="top:224.70px">[2019-02-22 23:25:40] <span class="cc">提交从正在采集的重庆时时彩第</span>20190222057<span class="cc">数据：</span>5,9,6,0,8</div>
<div class="tl" style="top:237.80px">[2019-02-22 23:25:40] <span class="cc">重庆时时彩第</span>20190222057<span class="cc">期数据已经存在数据</span></div>
<div class="tl" style="top:250.90px">[2019-02-22 23:25:41] <span class="cc">休眠</span>10<span class="cc">秒后从正在采集重庆时时彩数据</span>...</div>
<div class="tl" style="top:264.00px">[2019-02-22 23:25:41] <span class="cc">提交从正在采集的秒速飞艇第</span>190222765<span class="cc">数据：</span>7,6,5,8,2,10,4,1,</div>
<div class="tl" style="top:277.10px">3,9</div>
<div class="tl" style="top:290.20px">[2019-02-22 23:25:41] <span class="cc">秒速飞艇第</span>190222765<span class="cc">期数据已经存在数据</span></div>
<div class="tl" style="top:303.30px">[2019-02-22 23:25:41] <span class="cc">休眠</span>10<span class="cc">秒后从正在采集秒速飞艇数据</span>...</div></div>
 <div id="cscroll">
   <div class="sb" style="top:1px"><svg width="12" height="11" viewBox="0 0 12 11"><path d="M2.8 7 L6 3.6 L9.2 7 Z" fill="#000"/></svg></div>
   <div class="sb thumb" style="top:164px;height:24.5px"></div>
   <div class="sb" style="top:316px"><svg width="12" height="11" viewBox="0 0 12 11"><path d="M2.8 4 L6 7.4 L9.2 4 Z" fill="#000"/></svg></div>
 </div>
</div>
<svg id="logo" width="200" height="62" viewBox="0 0 200 62">
<defs><linearGradient id="bg1" x1="0" y1="0" x2="0" y2="1"><stop offset="0.1" stop-color="#4a9ce2"/><stop offset="0.55" stop-color="#2f7fca"/><stop offset="1" stop-color="#1d5ca6"/></linearGradient></defs>
<polygon points="14.5,17.5 37,21.5 44.5,41 41,53 10,53 8.5,23" fill="#0a0a0a"/><g id="dots" stroke="#fff" stroke-opacity="0.55" stroke-width="1.1" paint-order="stroke"><ellipse cx="17.4" cy="19.2" rx="2.70" ry="1.80" fill="#f4623a" transform="rotate(20 17.4 19.2)"/><ellipse cx="24.3" cy="20.8" rx="2.48" ry="1.80" fill="#f4623a" transform="rotate(20 24.3 20.8)"/><ellipse cx="30.1" cy="22.1" rx="2.29" ry="1.80" fill="#ee3d14" transform="rotate(20 30.1 22.1)"/><ellipse cx="35.6" cy="23.3" rx="2.12" ry="1.80" fill="#ee3d14" transform="rotate(20 35.6 23.3)"/><ellipse cx="11.2" cy="24.3" rx="3.29" ry="2.20" fill="#2fa0e4" transform="rotate(18 11.2 24.3)"/><ellipse cx="18.8" cy="25.4" rx="3.02" ry="2.20" fill="#2fa0e4" transform="rotate(18 18.8 25.4)"/><ellipse cx="25.8" cy="26.6" rx="2.76" ry="2.20" fill="#f4623a" transform="rotate(18 25.8 26.6)"/><ellipse cx="31.8" cy="27.8" rx="2.54" ry="2.20" fill="#ee3d14" transform="rotate(18 31.8 27.8)"/><ellipse cx="37.4" cy="29.1" rx="2.34" ry="2.20" fill="#ee3d14" transform="rotate(18 37.4 29.1)"/><ellipse cx="11.8" cy="30.7" rx="3.37" ry="2.70" fill="#2fa0e4" transform="rotate(18 11.8 30.7)"/><ellipse cx="19.8" cy="32.0" rx="3.07" ry="2.70" fill="#2fa0e4" transform="rotate(18 19.8 32.0)"/><ellipse cx="27.0" cy="33.1" rx="2.80" ry="2.70" fill="#f4623a" transform="rotate(18 27.0 33.1)"/><ellipse cx="33.5" cy="34.3" rx="2.56" ry="2.70" fill="#ee3d14" transform="rotate(18 33.5 34.3)"/><ellipse cx="39.7" cy="35.5" rx="2.33" ry="2.70" fill="#ee3d14" transform="rotate(18 39.7 35.5)"/><ellipse cx="12.6" cy="39.4" rx="3.34" ry="3.40" fill="#2fa0e4" transform="rotate(25 12.6 39.4)"/><ellipse cx="21.0" cy="40.3" rx="3.03" ry="3.40" fill="#2886d4" transform="rotate(25 21.0 40.3)"/><ellipse cx="28.7" cy="41.3" rx="2.74" ry="3.40" fill="#2886d4" transform="rotate(25 28.7 41.3)"/><ellipse cx="35.6" cy="41.9" rx="2.48" ry="3.40" fill="#1f63ad" transform="rotate(25 35.6 41.9)"/><ellipse cx="41.9" cy="42.5" rx="2.24" ry="3.40" fill="#ee3d14" transform="rotate(25 41.9 42.5)"/><ellipse cx="13.4" cy="48.9" rx="3.60" ry="3.90" fill="#2886d4" transform="rotate(0 13.4 48.9)"/><ellipse cx="22.2" cy="49.2" rx="3.24" ry="3.90" fill="#2886d4" transform="rotate(0 22.2 49.2)"/><ellipse cx="30.4" cy="49.4" rx="2.91" ry="3.90" fill="#1f63ad" transform="rotate(0 30.4 49.4)"/><ellipse cx="37.5" cy="49.6" rx="2.62" ry="3.90" fill="#1f63ad" transform="rotate(0 37.5 49.6)"/></g>
<text x="50" y="22.6" font-family="Liberation Sans,sans-serif" font-size="20.6" fill="#f4661a" stroke="#f4661a" stroke-width="0.7" textLength="118" lengthAdjust="spacingAndGlyphs">Ymfxz.com</text>
<rect x="168.4" y="13" width="21" height="10" fill="#f0521e"/>
<text x="169.2" y="21.3" font-family="Noto Sans CJK SC,sans-serif" font-size="9.6" font-weight="bold" fill="#fff">官网</text>
<text x="46.5" y="52" font-family="Noto Sans CJK SC,sans-serif" font-weight="900" font-size="30" fill="url(#bg1)" stroke="#fff" stroke-width="2.2" paint-order="stroke" textLength="144" lengthAdjust="spacingAndGlyphs">源码分享站</text>
</svg>

</div>
</body></html>
